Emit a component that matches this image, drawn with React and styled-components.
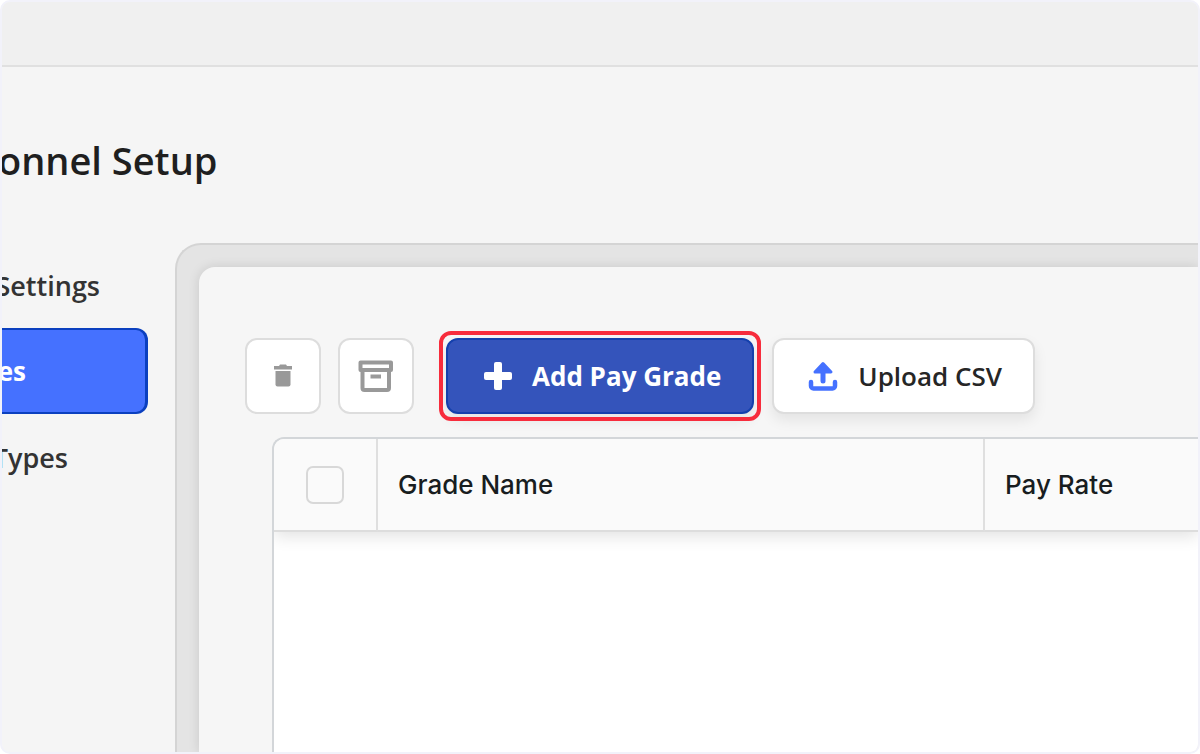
import React, { useState } from 'react';
import styled, { createGlobalStyle, css } from 'styled-components';

const GlobalStyle = createGlobalStyle`
  * {
    box-sizing: border-box;
  }

  body {
    margin: 0;
    background: #ffffff;
    color: #1f1f1f;
    font-family: 'Open Sans', 'Noto Sans', sans-serif;
  }
`;

// Styled Components
const Frame = styled.div`
  display: flex;
  flex-direction: column;
  height: 100vh;
  border: 2px solid #f2f2fa;
  border-radius: 10px;
  background: #f5f5f5;
  overflow: hidden;
`;

const TopBar = styled.header`
  flex: none;
  height: 65px;
  background: #f0f0f0;
  border-bottom: 2px solid #e0e0e0;
`;

const PageTitle = styled.h1`
  flex: none;
  margin: 0 0 0 -4px;
  padding: 67px 0 56px;
  font-size: 38px;
  font-weight: 600;
  line-height: 52px;
  white-space: nowrap;
`;

const Content = styled.div`
  flex: 1;
  display: flex;
  gap: 27px;
  min-height: 0;
`;

const SideNav = styled.nav`
  flex: none;
  width: 146px;
`;

const NavItem = styled.a`
  display: flex;
  justify-content: flex-end;
  align-items: center;
  height: 86px;
  padding-right: ${props => props.$end}px;
  border: 2px solid transparent;
  border-width: 2px 3px 2px 0;
  border-radius: 0 12px 12px 0;
  color: #333333;
  font-size: 27px;
  font-weight: 600;
  text-decoration: none;
  white-space: nowrap;

  ${props => props.$active && css`
    background: #4571ff;
    border-color: #0b40bf;
    color: #ffffff;
    font-size: 26px;
    font-weight: 700;
  `}
`;

const Panel = styled.main`
  flex: 1;
  display: flex;
  min-width: 0;
  margin-top: 1px;
  padding: 22px 0 0 22px;
  border: 2px solid #d4d4d4;
  border-width: 2px 0 0 2px;
  border-radius: 26px 0 0 0;
  background: #e4e4e4;
`;

const Card = styled.section`
  flex: 1;
  display: flex;
  flex-direction: column;
  min-width: 0;
  padding: 71px 0 0 46px;
  border-radius: 16px 0 0 0;
  background: #f6f6f6;
  box-shadow: 0 0 12px rgba(0, 0, 0, 0.12);
`;

const Toolbar = styled.div`
  display: flex;
  align-items: center;
  gap: 18px;
  margin-bottom: 23px;
`;

const ButtonGroup = styled.div`
  display: flex;
  gap: 17px;
  margin-right: 14px;
`;

const Button = styled.button`
  display: flex;
  justify-content: center;
  align-items: center;
  height: 76px;
  padding: 0;
  border: 2px solid #dddddd;
  border-radius: 12px;
  background: #ffffff;
  color: #262626;
  font-family: inherit;
  font-size: 26px;
  font-weight: 600;
  line-height: 34px;
  white-space: nowrap;
  cursor: pointer;

  svg {
    flex: none;
  }
`;

const IconButton = styled(Button)`
  width: 76px;
  color: #999999;
`;

const TextButton = styled(Button)`
  gap: 17px;
  padding: 0 31px;
  box-shadow: 0 6px 14px rgba(0, 0, 0, 0.08);

  svg {
    color: #4571ff;
  }
`;

const PrimaryButton = styled(TextButton)`
  position: relative;
  border-color: #1440ad;
  background: #3454bb;
  color: #ffffff;
  font-weight: 700;

  svg {
    color: #ffffff;
  }

  &::after {
    content: '';
    position: absolute;
    inset: -9px;
    border: 4px solid #f72c3c;
    border-radius: 12px;
  }
`;

const TableBox = styled.div`
  flex: 1;
  min-height: 0;
  margin-left: 27px;
  border: 2px solid #d3d6d9;
  border-width: 2px 0 0 2px;
  border-radius: 12px 0 0 0;
  background: #ffffff;
  overflow: hidden;
`;

const Table = styled.table`
  width: 100%;
  border-collapse: separate;
  border-spacing: 0;
  table-layout: fixed;
  box-shadow: 0 4px 16px rgba(0, 0, 0, 0.12);
`;

const HeadCell = styled.th`
  width: ${props => props.$width};
  height: 93px;
  padding: 0 20px;
  border-right: ${props => (props.$last ? '0' : '2px solid #dfdfdf')};
  border-bottom: 2px solid #dddddd;
  background: #fafafa;
  color: #181d1f;
  font-family: Inter, sans-serif;
  font-size: 26px;
  font-weight: 500;
  text-align: left;
  white-space: nowrap;
`;

const Checkbox = styled.input`
  appearance: none;
  display: block;
  width: 38px;
  height: 38px;
  margin: 0 auto;
  border: 2px solid #d8d8d8;
  border-radius: 7px;
  background: #fafafa;

  &:checked {
    background: #4571ff;
  }
`;

const TrashIcon = () => (
  <svg width="36" height="36" viewBox="0 0 36 36" fill="currentColor" aria-hidden="true">
    <path d="M10.5 13h15v13.5a2 2 0 0 1-2 2h-11a2 2 0 0 1-2-2z" />
    <path d="M9 8h5l1-1.5h6L22 8h5v3.500H9z" />
  </svg>
);

const ArchiveIcon = () => (
  <svg
    width="36"
    height="36"
    viewBox="0 0 36 36"
    fill="none"
    stroke="currentColor"
    strokeWidth="4"
    strokeLinejoin="round"
    aria-hidden="true"
  >
    <path d="M2.500 4.500h30.500v7.500h-30.500z" />
    <path d="M4.500 12v18a2 2 0 0 0 2 2h22.500a2 2 0 0 0 2-2V12" />
    <path d="M12.500 18.500h10.500" />
  </svg>
);

const PlusIcon = () => (
  <svg width="36" height="36" viewBox="0 0 36 36" fill="currentColor" aria-hidden="true">
    <rect x="15" y="4" width="8" height="28" rx="2" />
    <rect x="5" y="14" width="28" height="8" rx="2" />
  </svg>
);

const UploadIcon = () => (
  <svg
    width="36"
    height="36"
    viewBox="0 0 36 36"
    fill="none"
    stroke="currentColor"
    strokeWidth="5"
    strokeLinecap="round"
    strokeLinejoin="round"
    aria-hidden="true"
  >
    <path d="M6 24v4a2.500 2.500 0 0 0 2.500 2.500h19a2.500 2.500 0 0 0 2.500-2.500v-4" strokeWidth="4.500" />
    <path d="M18 10v13" />
    <path d="M18 5.500l8 8.500h-16z" fill="currentColor" strokeWidth="3" />
  </svg>
);

const navItems = [
  { label: 'Settings', end: 45 },
  { label: 'es', end: 119, active: true },
  { label: 'Types', end: 77 },
];

const App = () => {
  const [allSelected, setAllSelected] = useState(false);

  return (
    <>
      <GlobalStyle />
      <Frame>
        <TopBar />
        <PageTitle>onnel Setup</PageTitle>
        <Content>
          <SideNav>
            {navItems.map(item => (
              <NavItem key={item.label} href="#" $end={item.end} $active={item.active}>
                {item.label}
              </NavItem>
            ))}
          </SideNav>

          <Panel>
            <Card>
              <Toolbar>
                <ButtonGroup>
                  <IconButton type="button" aria-label="Delete">
                    <TrashIcon />
                  </IconButton>
                  <IconButton type="button" aria-label="Archive">
                    <ArchiveIcon />
                  </IconButton>
                </ButtonGroup>
                <PrimaryButton type="button">
                  <PlusIcon />
                  Add Pay Grade
                </PrimaryButton>
                <TextButton type="button">
                  <UploadIcon />
                  Upload CSV
                </TextButton>
              </Toolbar>

              <TableBox>
                <Table>
                  <thead>
                    <tr>
                      <HeadCell $width="104px">
                        <Checkbox
                          type="checkbox"
                          aria-label="Select all"
                          checked={allSelected}
                          onChange={e => setAllSelected(e.target.checked)}
                        />
                      </HeadCell>
                      <HeadCell $width="607px">Grade Name</HeadCell>
                      <HeadCell $last>Pay Rate</HeadCell>
                    </tr>
                  </thead>
                </Table>
              </TableBox>
            </Card>
          </Panel>
        </Content>
      </Frame>
    </>
  );
};

export default App;
